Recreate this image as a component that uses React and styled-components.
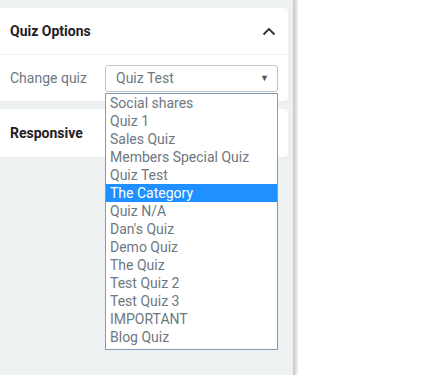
import React from "react";
import styled, { createGlobalStyle } from "styled-components";

const Global = createGlobalStyle`
  html, body { margin: 0; padding: 0; height: 100%; background: #fff; }
  body { font-family: Roboto, "Liberation Sans", sans-serif; }
  #root { height: 100%; }
`;

const Page = styled.div`
  display: flex;
  height: 375px;
  width: 434px;
  overflow: hidden;
`;

const Sidebar = styled.div`
  width: 293px;
  background: #eef1f2;
  padding: 8px 5px 0 0;
  box-sizing: border-box;
  display: flex;
  flex-direction: column;
  gap: 8px;
`;

const Divider = styled.div`
  width: 5px;
  background: linear-gradient(to right, #c4c6c8, #d9dbdc 50%, #f4f4f4);
`;

const Main = styled.div`
  flex: 1;
  background: #fff;
`;

const Card = styled.div`
  position: relative;
  z-index: ${(p) => p.$z || 1};
  background: #fff;
  border-radius: 0 4px 4px 0;
  box-shadow: 0 1px 2px rgba(0, 0, 0, 0.04);
`;

const CardHeader = styled.div`
  height: ${(p) => p.$h}px;
  display: flex;
  align-items: center;
  justify-content: space-between;
  padding: 0 12px 0 10px;
  border-bottom: ${(p) => (p.$open ? "1px solid #eef0f1" : "none")};
  box-sizing: border-box;
`;

const Title = styled.span`
  font-size: 14px;
  font-weight: 700;
  color: #1f2124;
`;

const Row = styled.div`
  display: flex;
  align-items: center;
  height: 46px;
  padding: 0 10px;
  position: relative;
`;

const Label = styled.span`
  width: 95px;
  font-size: 14px;
  color: #6d7882;
`;

const SelectBox = styled.div`
  width: 173px;
  height: 27px;
  box-sizing: border-box;
  border: 1px solid #c2c7cc;
  border-radius: 3px;
  display: flex;
  align-items: center;
  justify-content: space-between;
  padding: 0 8px 0 10px;
  font-size: 14px;
  color: #6d7882;
  position: relative;
`;

const Arrow = styled.span`
  font-size: 9px;
  color: #555;
`;

const ListBox = styled.ul`
  position: absolute;
  left: -1px;
  top: 27px;
  width: 173px;
  box-sizing: border-box;
  margin: 0;
  padding: 0 0 3px;
  list-style: none;
  background: #fff;
  border: 1px solid #7f9db9;
  z-index: 10;
`;

const Option = styled.li`
  height: 18px;
  line-height: 18px;
  padding: 0 4px;
  font-size: 14px;
  white-space: nowrap;
  color: ${(p) => (p.$active ? "#fff" : "#6d7882")};
  background: ${(p) => (p.$active ? "#1e90ff" : "transparent")};
`;

const Chevron = () => (
  <svg width="14" height="9" viewBox="0 0 14 9">
    <path d="M1.5 7.5 L7 2 L12.5 7.5" fill="none" stroke="#2c2f33" strokeWidth="1.8" />
  </svg>
);

const options = [
  "Social shares",
  "Quiz 1",
  "Sales Quiz",
  "Members Special Quiz",
  "Quiz Test",
  "The Category",
  "Quiz N/A",
  "Dan's Quiz",
  "Demo Quiz",
  "The Quiz",
  "Test Quiz 2",
  "Test Quiz 3",
  "IMPORTANT",
  "Blog Quiz",
];

export default function App() {
  return (
    <>
      <Global />
      <Page>
        <Sidebar>
          <Card $z={2}>
            <CardHeader $h={47} $open>
              <Title>Quiz Options</Title>
              <Chevron />
            </CardHeader>
            <Row>
              <Label>Change quiz</Label>
              <SelectBox>
                <span>Quiz Test</span>
                <Arrow>▼</Arrow>
                <ListBox>
                  {options.map((o) => (
                    <Option key={o} $active={o === "The Category"}>
                      {o}
                    </Option>
                  ))}
                </ListBox>
              </SelectBox>
            </Row>
          </Card>
          <Card>
            <CardHeader $h={48}>
              <Title>Responsive</Title>
            </CardHeader>
          </Card>
        </Sidebar>
        <Divider />
        <Main />
      </Page>
    </>
  );
}
